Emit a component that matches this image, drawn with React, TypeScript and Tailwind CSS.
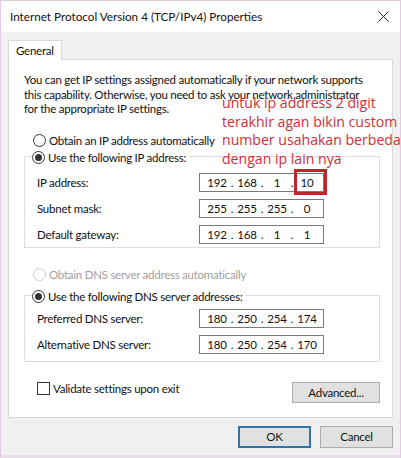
import React from "react";

const font = { fontFamily: 'Lato, "Noto Sans", sans-serif' };
const redFont = { fontFamily: '"Open Sans", "Noto Sans", sans-serif' };
const T = "text-[11.5px] tracking-[-0.25px]";

function Radio({ checked, disabled }: { checked?: boolean; disabled?: boolean }) {
  return (
    <span
      className={`flex h-[13px] w-[13px] shrink-0 items-center justify-center rounded-full border bg-white ${
        disabled ? "border-[#cccccc]" : "border-[#333333]"
      }`}
    >
      {checked && <span className="h-[7px] w-[7px] rounded-full bg-[#333333]" />}
    </span>
  );
}

function IpField({ parts, highlightLast }: { parts: string[]; highlightLast?: boolean }) {
  return (
    <div className={`relative flex h-[19px] w-[125px] shrink-0 items-center border border-[#7a7a7a] bg-white pl-[5px] text-[#111] ${T}`}>
      {parts.map((p, i) => (
        <React.Fragment key={i}>
          <span className="w-[24px] text-center">{p}</span>
          {i < 3 && <span className="w-[6px] text-center">.</span>}
        </React.Fragment>
      ))}
      {highlightLast && (
        <span className="absolute left-[94px] top-[-5px] h-[26px] w-[33px] border-[3px] border-[#c4232d]" />
      )}
    </div>
  );
}

function Row({ label, parts, highlightLast }: { label: string; parts: string[]; highlightLast?: boolean }) {
  return (
    <div className="flex h-[19px] items-center">
      <span className={`w-[174px] whitespace-nowrap pl-[12px] text-[#111] ${T}`}>{label}</span>
      <IpField parts={parts} highlightLast={highlightLast} />
    </div>
  );
}

export default function App() {
  return (
    <div
      className="flex h-[458px] w-[401px] flex-col overflow-hidden whitespace-nowrap border-x border-t border-[#e3cbe3] bg-[#f0f0f0]"
      style={font}
    >
      {/* Title bar */}
      <div className="flex h-[31px] shrink-0 items-center justify-between bg-white pl-[9px] pr-[10px]">
        <span className="text-[11.7px] text-[#111]">Internet Protocol Version 4 (TCP/IPv4) Properties</span>
        <svg width="11" height="11" viewBox="0 0 11 11" className="mr-[1px]">
          <path d="M0.5 0.5 L10.5 10.5 M10.5 0.5 L0.5 10.5" stroke="#222" strokeWidth="1" />
        </svg>
      </div>

      {/* Tabs */}
      <div className="mt-[8px] flex pl-[7px]">
        <div className={`relative z-10 -mb-px flex h-[20px] w-[54px] items-center border border-b-0 border-[#d9d9d9] bg-white pl-[7px] text-[#111] ${T}`}>
          General
        </div>
      </div>

      {/* Panel */}
      <div className="mx-[7px] flex h-[359px] shrink-0 flex-col border border-[#d9d9d9] bg-white pl-[15px] pr-[12px]">
        <div className="relative">
          <p className={`mt-[13px] w-fit leading-[14.5px] text-[#111] ${T}`}>
            You can get IP settings assigned automatically if your network supports
            <br />
            this capability. Otherwise, you need to ask your network administrator
            <br />
            for the appropriate IP settings.
          </p>
          <div
            className="absolute left-[198px] top-[34px] z-20 text-[14.1px] leading-[18.5px] text-[#cf3039]"
            style={redFont}
          >
            untuk ip address 2 digit
            <br />
            terakhir agan bikin custom
            <br />
            number usahakan berbeda
            <br />
            dengan ip lain nya
          </div>
        </div>

        <div className={`mt-[15px] flex items-center gap-[3px] pl-[9px] text-[#111] ${T}`}>
          <Radio />
          <span>Obtain an IP address automatically</span>
        </div>

        {/* IP group */}
        <div className="relative mt-[7px] h-[92px] w-[356px] shrink-0 border border-[#dcdcdc]">
          <div className={`absolute left-[7px] top-[-8px] flex items-center gap-[3px] bg-white pr-[3px] text-[#111] ${T}`}>
            <Radio checked />
            <span>Use the following IP address:</span>
          </div>
          <div className="flex flex-col gap-[7px] pt-[16px]">
            <Row label="IP address:" parts={["192", "168", "1", "10"]} highlightLast />
            <Row label="Subnet mask:" parts={["255", "255", "255", "0"]} />
            <Row label="Default gateway:" parts={["192", "168", "1", "1"]} />
          </div>
        </div>

        <div className={`mt-[18px] flex items-center gap-[3px] pl-[9px] text-[#a0a0a0] ${T}`}>
          <Radio disabled />
          <span>Obtain DNS server address automatically</span>
        </div>

        {/* DNS group */}
        <div className="relative mt-[12px] h-[67px] w-[356px] shrink-0 border border-[#dcdcdc]">
          <div className={`absolute left-[7px] top-[-8px] flex items-center gap-[3px] bg-white pr-[3px] text-[#111] ${T}`}>
            <Radio checked />
            <span>Use the following DNS server addresses:</span>
          </div>
          <div className="flex flex-col gap-[7px] pt-[13px]">
            <Row label="Preferred DNS server:" parts={["180", "250", "254", "174"]} />
            <Row label="Alternative DNS server:" parts={["180", "250", "254", "170"]} />
          </div>
        </div>

        <div className="mt-[20px] flex items-start justify-between">
          <div className={`mt-[-2px] flex items-center gap-[3px] pl-[13px] text-[#111] ${T}`}>
            <span className="h-[13px] w-[13px] border border-[#333333] bg-white" />
            <span>Validate settings upon exit</span>
          </div>
          <button className={`h-[21px] w-[88px] border border-[#adadad] bg-[#e1e1e1] text-[#111] ${T}`}>
            Advanced...
          </button>
        </div>
      </div>

      {/* Footer buttons */}
      <div className="mt-[8px] flex justify-end gap-[9px] pr-[7px]">
        <button className={`h-[22px] w-[73px] border-2 border-[#2f73ad] bg-[#e1e1e1] text-[#111] ${T}`}>
          OK
        </button>
        <button className={`h-[22px] w-[73px] border border-[#adadad] bg-[#e1e1e1] text-[#111] ${T}`}>
          Cancel
        </button>
      </div>
      <div className="flex-1" />
      <div className="h-[3px] bg-[#eadbea]" />
    </div>
  );
}
